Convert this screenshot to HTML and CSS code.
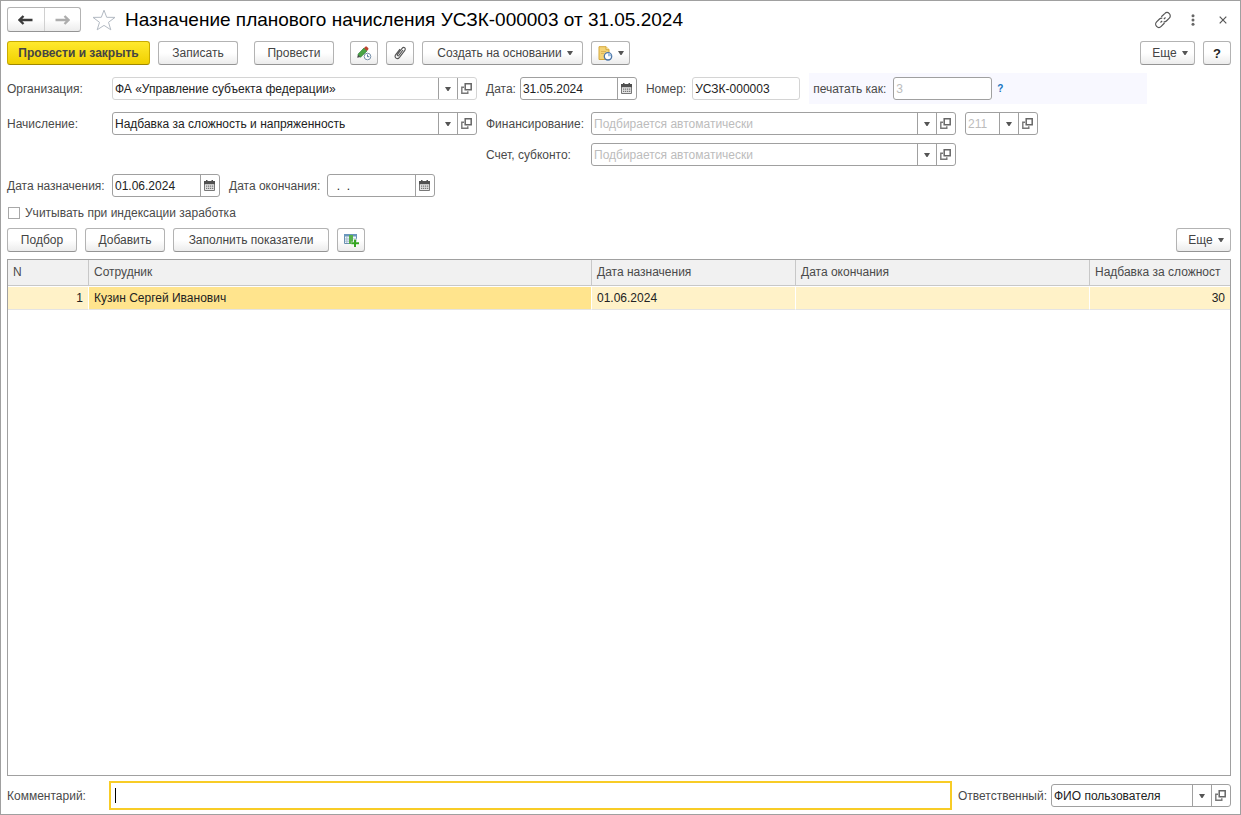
FILE: index.html
```html
<!DOCTYPE html>
<html lang="ru">
<head>
<meta charset="utf-8">
<title>Назначение планового начисления</title>
<link rel="stylesheet" href="styles.css">
</head>
<body>
<svg class="defs" aria-hidden="true">
  <symbol id="caret" viewBox="0 0 6 4"><path d="M0 0h6L3.500 4h-1z" fill="currentColor"/></symbol>
  <symbol id="open" viewBox="0 0 11 11"><path d="M4.200.8h6v6h-6z" fill="none" stroke="#666" stroke-width="1.500"/><path d="M3 4.200H.8v6h6V8.300" fill="none" stroke="#777" stroke-width="1.400"/></symbol>
  <symbol id="calendar" viewBox="0 0 11 11"><path d="M.5 1.500h10v9H.5z" fill="#e4e4e4" stroke="#777"/><path d="M0 1h11v3.200H0z" fill="#505050"/><path d="M2 0h1.500v2H2zM7.500 0H9v2H7.500z" fill="#505050"/><path d="M2 5.500h1.300v1.300H2zM4 5.500h1.300v1.300H4zM6 5.500h1.300v1.300H6zM8 5.500h1.300v1.300H8zM2 7.800h1.300v1.300H2zM4 7.800h1.300v1.300H4zM6 7.800h1.300v1.300H6zM8 7.800h1.300v1.300H8z" fill="#777"/></symbol>
</svg>
<main class="window">
  <header class="titlebar">
    <div class="nav">
      <button type="button" class="nav-btn" aria-label="Назад"><svg width="15" height="10" viewBox="0 0 15 10"><path d="M5.500 1L1.500 5l4 4M2 5h12.500" fill="none" stroke="#3c3c3c" stroke-width="2.300"/></svg></button>
      <button type="button" class="nav-btn" aria-label="Вперед"><svg width="15" height="10" viewBox="0 0 15 10"><path d="M9.500 1l4 4-4 4M13 5H.5" fill="none" stroke="#adadad" stroke-width="2.300"/></svg></button>
    </div>
    <button type="button" class="plain star" aria-label="В избранное"><svg width="24" height="22" viewBox="0 0 24 22"><path d="M12 1.200l2.700 7.100 8.300.1-6.500 4.900 2.300 7.500-6.800-4.400-6.800 4.400 2.300-7.500L1 8.400l8.300-.1z" fill="none" stroke="#b3bac3" stroke-width="1"/></svg></button>
    <h1>Назначение планового начисления УСЗК-000003 от 31.05.2024</h1>
    <div class="window-tools">
      <button type="button" class="plain" aria-label="Ссылка"><svg width="18" height="18" viewBox="0 0 18 18" fill="none" stroke="#555" stroke-width="1.200"><path d="M7.300 5.800l3.400-3.200a3.200 3.200 0 0 1 4.600 4.600L12.400 10a3.200 3.200 0 0 1-2.800.9M10.500 12l-3.300 3.400a3.200 3.200 0 0 1-4.600-4.600L5.500 8a3.200 3.200 0 0 1 2.800-.9M6.500 11.500l1.700-1.700M9.800 8.200l1.700-1.700"/></svg></button>
      <button type="button" class="plain" aria-label="Меню"><svg width="4" height="12" viewBox="0 0 4 12" fill="#666"><circle cx="2" cy="1.700" r="1.500"/><circle cx="2" cy="6" r="1.500"/><circle cx="2" cy="10.300" r="1.500"/></svg></button>
      <button type="button" class="plain" aria-label="Закрыть"><svg width="8" height="8" viewBox="0 0 8 8"><path d="M.7.7l6.600 6.600M7.300.7L.7 7.300" stroke="#555" stroke-width="1.200"/></svg></button>
    </div>
  </header>

  <div class="toolbar">
    <button type="button" class="btn primary">Провести и закрыть</button>
    <button type="button" class="btn medium">Записать</button>
    <button type="button" class="btn medium group-start">Провести</button>
    <button type="button" class="btn icon group-start" aria-label="Изменить"><svg width="16" height="16" viewBox="0 0 16 16"><path d="M1.200 12.700L2 9.200 4.500 12z" fill="#444"/><path d="M2 9.200L8 3l3 3-6.500 6.200z" fill="#4aa545" stroke="#2c7c35" stroke-width=".7"/><path d="M8 3l1.300-1.300q.8-.7 1.500 0L12.200 3q.7.8 0 1.500L11 6z" fill="#bd432f"/><circle cx="11.500" cy="11.500" r="3.300" fill="#fff" stroke="#7790aa"/><path d="M11.500 9.500v2.200h1.800" fill="none" stroke="#557a9f"/></svg></button>
    <button type="button" class="btn icon" aria-label="Файлы"><svg width="14" height="14" viewBox="0 0 14 14"><path d="M10 4L5.900 9.300c-.9 1.100-2.200.1-1.400-1l4.600-6c1.600-2 4.300-.1 2.700 2L6.500 11.400c-2.200 2.800-5.900.1-3.800-2.700L7 3.100" fill="none" stroke="#555" stroke-width="1.100"/></svg></button>
    <button type="button" class="btn create">Создать на основании<svg class="caret"><use href="#caret"/></svg></button>
    <button type="button" class="btn picture" aria-label="Отчеты"><svg width="15" height="15" viewBox="0 0 15 15"><path d="M1 .7h7l3 3v9.800H1z" fill="#f4d477" stroke="#d5a83d"/><path d="M8 .7v3h3" fill="#fff0b5" stroke="#d5a83d"/><path d="M3 5.500h5M3 7.500h3" stroke="#dcb557"/><circle cx="10" cy="10.300" r="3.700" fill="#fff" stroke="#4c75a6" stroke-width="1.300"/><path d="M10 7v3.300h3.300A3.300 3.300 0 0 0 10 7z" fill="#9dbfe0"/></svg><svg class="caret"><use href="#caret"/></svg></button>
    <button type="button" class="btn more push">Еще<svg class="caret"><use href="#caret"/></svg></button>
    <button type="button" class="btn icon help">?</button>
  </div>

  <form class="form">
    <div class="row tall">
      <label class="main-label" for="org">Организация:</label>
      <div class="field wide soft"><input id="org" type="text" value="ФА «Управление субъекта федерации»"><button type="button" aria-label="Выбрать"><svg class="caret"><use href="#caret"/></svg></button><button type="button" aria-label="Открыть"><svg class="glyph"><use href="#open"/></svg></button></div>
      <div class="pair"><label for="date">Дата:</label><div class="field date"><input id="date" type="text" value="31.05.2024"><button type="button" aria-label="Календарь"><svg class="glyph"><use href="#calendar"/></svg></button></div></div>
      <div class="pair number"><label for="number">Номер:</label><div class="field short soft"><input id="number" type="text" value="УСЗК-000003"></div></div>
      <div class="print-as"><label for="print">печатать как:</label><div class="field print"><input id="print" type="text" placeholder="3"></div><a href="#help">?</a></div>
    </div>
    <div class="row">
      <label class="main-label" for="accrual">Начисление:</label>
      <div class="field wide"><input id="accrual" type="text" value="Надбавка за сложность и напряженность"><button type="button" aria-label="Выбрать"><svg class="caret"><use href="#caret"/></svg></button><button type="button" aria-label="Открыть"><svg class="glyph"><use href="#open"/></svg></button></div>
      <label class="main-label second" for="funding">Финансирование:</label>
      <div class="field wide"><input id="funding" type="text" placeholder="Подбирается автоматически"><button type="button" aria-label="Выбрать"><svg class="caret"><use href="#caret"/></svg></button><button type="button" aria-label="Открыть"><svg class="glyph"><use href="#open"/></svg></button></div>
      <div class="field code gap-left"><input type="text" aria-label="Код" placeholder="211"><button type="button" aria-label="Выбрать"><svg class="caret"><use href="#caret"/></svg></button><button type="button" aria-label="Открыть"><svg class="glyph"><use href="#open"/></svg></button></div>
    </div>
    <div class="row">
      <div class="blank"></div>
      <label class="main-label second" for="account">Счет, субконто:</label>
      <div class="field wide"><input id="account" type="text" placeholder="Подбирается автоматически"><button type="button" aria-label="Выбрать"><svg class="caret"><use href="#caret"/></svg></button><button type="button" aria-label="Открыть"><svg class="glyph"><use href="#open"/></svg></button></div>
    </div>
    <div class="row">
      <label class="main-label" for="start">Дата назначения:</label>
      <div class="field short"><input id="start" type="text" value="01.06.2024"><button type="button" aria-label="Календарь"><svg class="glyph"><use href="#calendar"/></svg></button></div>
      <label class="end-label second" for="end">Дата окончания:</label>
      <div class="field short"><input id="end" type="text" value="  .  ."><button type="button" aria-label="Календарь"><svg class="glyph"><use href="#calendar"/></svg></button></div>
    </div>
    <label class="check"><input type="checkbox">Учитывать при индексации заработка</label>
  </form>

  <div class="toolbar">
    <button type="button" class="btn pick">Подбор</button>
    <button type="button" class="btn medium">Добавить</button>
    <button type="button" class="btn fill">Заполнить показатели</button>
    <button type="button" class="btn icon" aria-label="Добавить колонку"><svg width="15" height="14" viewBox="0 0 15 14"><path d="M.5 1.500h12v9H.5z" fill="#eef4fa" stroke="#6a8fb0"/><path d="M0 1h13v2.500H0z" fill="#6a96bd"/><path d="M1 6h12M1 8.200h12M2.800 3v7" stroke="#a5bccf"/><path d="M5 2h4v9H5z" fill="#58b04b"/><path d="M11 6v8M7.300 10.300H15" stroke="#fff" stroke-width="3"/><path d="M11 6.500V14M7.300 10.300H15" stroke="#35a522" stroke-width="2"/></svg></button>
    <button type="button" class="btn more push">Еще<svg class="caret"><use href="#caret"/></svg></button>
  </div>

  <div class="table-box">
    <table>
      <colgroup><col class="c-num"><col><col class="c-start"><col class="c-end"><col class="c-rate"></colgroup>
      <thead><tr><th>N</th><th>Сотрудник</th><th>Дата назначения</th><th>Дата окончания</th><th>Надбавка за сложност</th></tr></thead>
      <tbody><tr><td class="num">1</td><td class="current">Кузин Сергей Иванович</td><td>01.06.2024</td><td></td><td class="num">30</td></tr></tbody>
    </table>
  </div>

  <footer class="footer">
    <label class="comment-label" for="comment">Комментарий:</label>
    <div class="comment"><input id="comment" type="text"></div>
    <label class="owner-label" for="owner">Ответственный:</label>
    <div class="field owner"><input id="owner" type="text" value="ФИО пользователя"><button type="button" aria-label="Выбрать"><svg class="caret"><use href="#caret"/></svg></button><button type="button" aria-label="Открыть"><svg class="glyph"><use href="#open"/></svg></button></div>
  </footer>
</main>
</body>
</html>
```
FILE: styles.css
```css
* { box-sizing: border-box; }
body { margin: 0; background: #fff; color: #4a4a4a; }
body, input, button { font-family: "Liberation Sans", Arial, sans-serif; font-size: 12px; }
.defs { position: absolute; width: 0; height: 0; }
svg { display: block; flex: none; }
label { white-space: nowrap; flex: none; }

.window {
  min-height: 100vh;
  display: flex;
  flex-direction: column;
  gap: 8px;
  padding: 5px 9px 4px 6px;
  border: 1px solid #a0a0a0;
}

.titlebar { display: flex; align-items: center; height: 27px; }
h1 { margin: 0 0 0 9px; font-size: 19px; font-weight: 400; color: #000; white-space: nowrap; }
.nav {
  display: flex;
  width: 74px;
  height: 25px;
  border: 1px solid #b3b3b3;
  border-bottom-color: #949494;
  border-radius: 3px;
  background: linear-gradient(#fff 50%, #ececec);
}
.nav-btn {
  flex: 1;
  display: flex;
  align-items: center;
  justify-content: center;
  padding: 0;
  border: 0;
  background: none;
}
.nav-btn + .nav-btn { border-left: 1px solid #d0d0d0; }
.plain { display: flex; padding: 0; border: 0; background: none; }
.star { margin-left: 11px; }
.window-tools { display: flex; align-items: center; gap: 19px; margin-left: auto; padding-right: 4px; }
.window-tools .plain:last-child { margin-left: 5px; }

.toolbar { display: flex; gap: 8px; }
.btn {
  display: flex;
  align-items: center;
  justify-content: center;
  height: 24px;
  padding: 0;
  border: 1px solid #b3b3b3;
  border-bottom-color: #949494;
  border-radius: 3px;
  background: linear-gradient(#fff 50%, #ececec);
  color: #444;
  white-space: nowrap;
}
.primary {
  width: 143px;
  border-color: #c9ab00;
  border-bottom-color: #a08800;
  background: linear-gradient(#ffe92e, #f0d000);
  font-weight: 700;
}
.medium { width: 80px; }
.pick { width: 70px; }
.fill { width: 156px; }
.create { width: 161px; }
.more { width: 55px; }
.icon { width: 28px; }
.help { font-size: 13px; font-weight: 700; color: #222; }
.group-start { margin-left: 8px; }
.push { margin-left: auto; }
.btn .caret { margin-left: 5px; }
.create, .more { padding-left: 5px; }
.picture { width: 39px; }
.caret { width: 6px; height: 4px; color: #555; }
.glyph { width: 11px; height: 11px; }

.form { display: flex; flex-direction: column; gap: 8px; }
.row { display: flex; align-items: center; min-height: 23px; }
.tall { min-height: 31px; }
.main-label { width: 105px; }
.end-label { width: 98px; }
.second, .pair, .print-as, .gap-left { margin-left: 9px; }
.blank { width: 470px; }
.pair, .print-as { display: flex; align-items: center; gap: 4px; }
.number { gap: 6px; }
.print-as { gap: 5px; width: 338px; height: 31px; padding-left: 4px; background: #f8f8ff; }
.print-as label { width: 75px; }
.print-as a { color: #1573c0; font-size: 10px; font-weight: 700; text-decoration: none; }

.field {
  display: flex;
  height: 23px;
  border: 1px solid #a0a0a0;
  border-radius: 3px;
  background: #fff;
}
.field input {
  flex: 1;
  min-width: 0;
  padding: 0 2px;
  border: 0;
  outline: 0;
  background: none;
  color: #222;
}
.field input::placeholder { color: #bcbcbc; }
.field button {
  flex: none;
  display: flex;
  align-items: center;
  justify-content: center;
  width: 19px;
  padding: 0 1px 0 0;
  border: 0;
  border-left: 1px solid #a0a0a0;
  background: none;
}
.soft { border-color: #d4d4d4; }
.wide { width: 365px; }
.date { width: 117px; }
.short { width: 108px; }
.print { width: 99px; }
.code { width: 73px; }
.owner { width: 180px; }

.check { display: flex; align-items: center; gap: 5px; height: 15px; }
.check input {
  appearance: none;
  width: 12px;
  height: 12px;
  margin: 0 0 0 1px;
  border: 1px solid #a8a8a8;
  background: #fff;
}

.table-box { flex: 1; margin-top: -1px; border: 1px solid #a0a0a0; overflow: hidden; }
table { width: 100%; table-layout: fixed; border-collapse: separate; border-spacing: 0; }
.c-num { width: 81px; }
.c-start { width: 204px; }
.c-end { width: 294px; }
.c-rate { width: 140px; }
th, td { padding: 0 5px; text-align: left; font-weight: 400; white-space: nowrap; overflow: hidden; }
th { height: 26px; padding-bottom: 2px; background: #f1f1f1; border-right: 1px solid #c8c8c8; border-bottom: 1px solid #c8c8c8; }
td {
  height: 24px;
  background: #fff2c8;
  background-clip: padding-box;
  border-top: 1px solid #fff;
  border-right: 1px solid #fff;
  border-bottom: 1px solid #e4e4e4;
  color: #222;
}
th:last-child, td:last-child { border-right: 0; }
.current { background-color: #ffe48d; }
.num { text-align: right; }

.footer { display: flex; align-items: center; margin-top: -3px; }
.comment-label { width: 102px; }
.comment { position: relative; flex: 1; height: 29px; border: 2px solid #f8cc26; }
.comment input { width: 100%; height: 100%; padding: 0 4px; border: 0; outline: 0; background: none; color: #222; }
.comment::before { content: ""; position: absolute; left: 4px; top: 5px; width: 1px; height: 15px; background: #000; }
.owner-label { width: 93px; margin-left: 6px; }
```
